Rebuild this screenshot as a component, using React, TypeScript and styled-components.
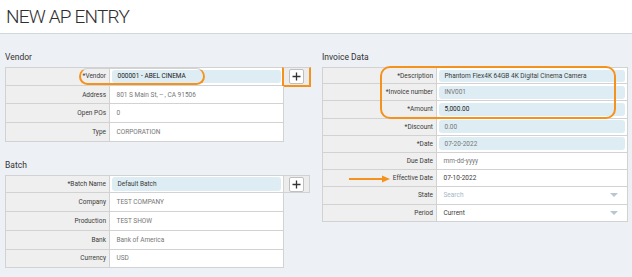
import styled, { createGlobalStyle } from 'styled-components';

const ORANGE = '#f5921e';

type Field = {
  label: string;
  value: string;
  kind: 'input' | 'text' | 'select';
  tone?: 'strong' | 'normal' | 'muted' | 'placeholder';
};

const vendorFields: Field[] = [
  { label: '*Vendor', value: '000001 - ABEL CINEMA', kind: 'input', tone: 'strong' },
  { label: 'Address', value: '801 S Main St, -- , CA 91506', kind: 'text', tone: 'muted' },
  { label: 'Open POs', value: '0', kind: 'text', tone: 'muted' },
  { label: 'Type', value: 'CORPORATION', kind: 'text', tone: 'muted' },
];

const batchFields: Field[] = [
  { label: '*Batch Name', value: 'Default Batch', kind: 'input', tone: 'normal' },
  { label: 'Company', value: 'TEST COMPANY', kind: 'text', tone: 'muted' },
  { label: 'Production', value: 'TEST SHOW', kind: 'text', tone: 'muted' },
  { label: 'Bank', value: 'Bank of America', kind: 'text', tone: 'muted' },
  { label: 'Currency', value: 'USD', kind: 'text', tone: 'muted' },
];

const invoiceFields: Field[] = [
  { label: '*Description', value: 'Phantom Flex4K 64GB 4K Digital Cinema Camera', kind: 'input', tone: 'normal' },
  { label: '*Invoice number', value: 'INV001', kind: 'input', tone: 'muted' },
  { label: '*Amount', value: '5,000.00', kind: 'input', tone: 'strong' },
  { label: '*Discount', value: '0.00', kind: 'input', tone: 'muted' },
  { label: '*Date', value: '07-20-2022', kind: 'input', tone: 'muted' },
  { label: 'Due Date', value: 'mm-dd-yyyy', kind: 'text', tone: 'muted' },
  { label: 'Effective Date', value: '07-10-2022', kind: 'text', tone: 'normal' },
  { label: 'State', value: 'Search', kind: 'select', tone: 'placeholder' },
  { label: 'Period', value: 'Current', kind: 'select', tone: 'normal' },
];

const toneColor = {
  strong: '#1a1a1a',
  normal: '#3a3a3a',
  muted: '#767676',
  placeholder: '#a9b5c3',
};

const GlobalStyle = createGlobalStyle`
  * { box-sizing: border-box; }
  body {
    margin: 0;
    background: #edf0f5;
    font-family: Roboto, "Liberation Sans", sans-serif;
    color: #333;
  }
`;

const Page = styled.div`
  min-height: 277px;
`;

const Header = styled.header`
  height: 34px;
  background: #fff;
  border-bottom: 1px solid #d3d6da;
  padding: 4px 0 0 6px;
  font-size: 19px;
  font-weight: 300;
  letter-spacing: -0.8px;
  line-height: 26px;
  color: #2e2e2e;
`;

const Body = styled.main`
  display: flex;
  gap: 12px;
  padding: 17px 5px 0;
`;

const Column = styled.div<{ $width: number }>`
  width: ${(p) => p.$width}px;
  display: flex;
  flex-direction: column;
`;

const SectionTitle = styled.h2<{ $top?: number }>`
  margin: ${(p) => p.$top ?? 0}px 0 0;
  height: 16px;
  font-size: 8.5px;
  font-weight: 400;
  line-height: 12px;
  color: #333;
`;

const Table = styled.div`
  position: relative;
  display: flex;
  flex-direction: column;
  align-items: flex-start;
`;

const Row = styled.div<{ $label: number; $value: number; $h: number; $addon?: boolean }>`
  position: relative;
  display: grid;
  grid-template-columns: ${(p) => `${p.$label}px ${p.$value}px${p.$addon ? ' 26px' : ''}`};
  height: ${(p) => p.$h}px;
  border-left: 1px solid #d2d2d2;

  & > * {
    border-right: 1px solid #d2d2d2;
    border-bottom: 1px solid #d2d2d2;
  }

  &:first-child > * {
    border-top: 1px solid #d2d2d2;
  }
`;

const Label = styled.div`
  background: #efefef;
  padding-right: 3px;
  font-size: 6.5px;
  color: #3a3a3a;
  display: flex;
  align-items: center;
  justify-content: flex-end;
  white-space: nowrap;
`;

const ValueCell = styled.div`
  background: #fff;
  padding: 1.5px 2px 1.5px 1.5px;
  display: flex;
  align-items: stretch;
  min-width: 0;
`;

const InputBox = styled.div<{ $tone: keyof typeof toneColor }>`
  flex: 1;
  background: #deedf3;
  border-radius: 3px;
  padding-left: 6px;
  display: flex;
  align-items: center;
  font-size: 6.5px;
  color: ${(p) => toneColor[p.$tone]};
  white-space: nowrap;
  overflow: hidden;
`;

const PlainValue = styled.div<{ $tone: keyof typeof toneColor }>`
  flex: 1;
  padding: 0 4px 0 5px;
  display: flex;
  align-items: center;
  justify-content: space-between;
  font-size: 6.5px;
  color: ${(p) => toneColor[p.$tone]};
  white-space: nowrap;
`;

const Caret = styled.span`
  width: 0;
  height: 0;
  border-left: 4px solid transparent;
  border-right: 4px solid transparent;
  border-top: 4px solid #b9c5d2;
  margin-right: 3px;
`;

const AddonCell = styled.div`
  background: #ececec;
  display: flex;
  align-items: center;
  justify-content: center;
`;

const PlusButton = styled.button`
  width: 15px;
  height: 15px;
  padding: 0;
  border: 1px solid #bfbfbf;
  border-radius: 2px;
  background: #fff;
  display: flex;
  align-items: center;
  justify-content: center;
  cursor: pointer;
`;

const Highlight = styled.div<{ $l: number; $t: number; $w: number; $h: number; $r: number }>`
  position: absolute;
  left: ${(p) => p.$l}px;
  top: ${(p) => p.$t}px;
  width: ${(p) => p.$w}px;
  height: ${(p) => p.$h}px;
  border: 2px solid ${ORANGE};
  border-radius: ${(p) => p.$r}px;
  pointer-events: none;
`;

const Arrow = styled.svg`
  position: absolute;
  left: 27px;
  top: 108px;
`;

const PlusIcon = () => (
  <svg width="9" height="9" viewBox="0 0 9 9">
    <path d="M4.5 0.5v8M0.5 4.5h8" stroke="#333" strokeWidth="1.3" />
  </svg>
);

function FieldRow({
  field,
  label,
  value,
  h,
  addon,
  children,
}: {
  field: Field;
  label: number;
  value: number;
  h: number;
  addon?: boolean;
  children?: React.ReactNode;
}) {
  const tone = field.tone ?? 'normal';
  return (
    <Row $label={label} $value={value} $h={h} $addon={addon}>
      <Label>{field.label}</Label>
      <ValueCell>
        {field.kind === 'input' ? (
          <InputBox $tone={tone}>{field.value}</InputBox>
        ) : (
          <PlainValue $tone={tone}>
            {field.value}
            {field.kind === 'select' && <Caret />}
          </PlainValue>
        )}
      </ValueCell>
      {addon && (
        <AddonCell>
          <PlusButton>
            <PlusIcon />
          </PlusButton>
        </AddonCell>
      )}
      {children}
    </Row>
  );
}

export default function App() {
  return (
    <Page>
      <GlobalStyle />
      <Header>NEW AP ENTRY</Header>
      <Body>
        <Column $width={305}>
          <SectionTitle>Vendor</SectionTitle>
          <Table>
            {vendorFields.map((f, i) => (
              <FieldRow key={f.label} field={f} label={104} value={174} h={18.7} addon={i === 0}>
                {i === 0 && (
                  <>
                    <Highlight $l={73} $t={1} $w={126} $h={17} $r={9} />
                    <Highlight $l={276} $t={0} $w={29} $h={20} $r={0} />
                  </>
                )}
              </FieldRow>
            ))}
          </Table>

          <SectionTitle $top={17}>Batch</SectionTitle>
          <Table>
            {batchFields.map((f, i) => (
              <FieldRow key={f.label} field={f} label={104} value={174} h={18.7} addon={i === 0} />
            ))}
          </Table>
        </Column>

        <Column $width={306}>
          <SectionTitle>Invoice Data</SectionTitle>
          <Table>
            {invoiceFields.map((f) => (
              <FieldRow key={f.label} field={f} label={114} value={191} h={17.2} />
            ))}
            <Highlight $l={58} $t={-1} $w={236} $h={53} $r={10} />
            <Arrow width="42" height="8" viewBox="0 0 42 8">
              <path d="M0 4h34" stroke={ORANGE} strokeWidth="2" />
              <path d="M33 0.5L41 4L33 7.5Z" fill={ORANGE} />
            </Arrow>
          </Table>
        </Column>
      </Body>
    </Page>
  );
}
